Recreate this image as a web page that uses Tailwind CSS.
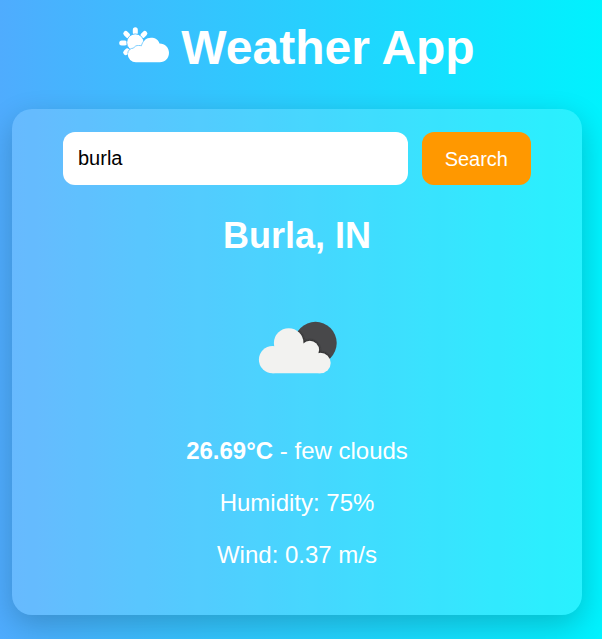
<!DOCTYPE html>
<html lang="en">
<head>
<meta charset="utf-8">
<meta name="viewport" content="width=device-width, initial-scale=1">
<title>Weather App</title>
<script src="https://cdn.jsdelivr.net/npm/@tailwindcss/browser@4"></script>
</head>
<body class="min-h-screen bg-linear-to-r/srgb from-[#4facfe] to-[#00f2fe] pt-5 pr-5 pb-6 pl-3 text-center font-['Liberation_Sans',Arial,sans-serif] text-white">
  <h1 class="mb-[33px] flex items-center justify-center gap-3 text-5xl/14 font-bold">
    <svg class="mb-1.5 h-9 w-[50px] shrink-0" viewBox="0 0 50 36" fill="none" aria-hidden="true">
      <g stroke="#fff" stroke-width="5" stroke-linecap="round">
        <path d="M16.300 2.700v3M6.800 6.500l2 2M25.800 6.500l-2 2M2.700 16h3M6.700 25.500l1.500-1.500"/>
      </g>
      <circle cx="16.300" cy="15.500" r="8.600" fill="#fff" stroke="#3fb8ff" stroke-width="0.800"/>
      <path d="M17 35.300a8.200 8.200 0 0 1-8.300-8c0-3.500 2.500-6 5.800-6.200 1.200-1.900 3-2.800 5.200-2.600 1-.1 1.900 0 2.700.3C23.600 13.700 27.200 10.700 32 10.700c4.300 0 7.400 2 8.500 5.700 5.500 0 9.500 4 9.500 9.400 0 5.500-3.900 9.500-9.200 9.500z" fill="#fff"/>
      <path d="M8.700 26.500c.2-3.200 2.600-5.300 5.800-5.400 1.200-1.900 3-2.800 5.200-2.600 1-.1 1.900 0 2.700.3.600-2.400 1.600-4.200 3.200-5.600" stroke="#7dcfff" stroke-width="1"/>
    </svg>
    Weather App
  </h1>
  <main class="rounded-[20px] bg-white/15 px-6 pt-[23px] pb-[46px] shadow-[0_10px_30px_rgba(0,0,0,0.2)]">
    <form class="mx-auto flex max-w-[468px] gap-[14px]" onsubmit="return false">
      <input type="text" aria-label="City" value="burla" class="h-[53px] min-w-0 flex-1 rounded-xl bg-white px-[15px] text-xl text-black outline-none">
      <button type="submit" class="h-[53px] rounded-xl bg-[#ff9800] px-[23px] text-xl text-white">Search</button>
    </form>
    <h2 class="mt-[31px] text-4xl/10 font-bold">Burla, IN</h2>
    <svg class="mx-auto mt-[65px] h-[54px] w-[82px]" viewBox="-2 0 82 54" role="img" aria-label="few clouds">
      <defs>
        <filter id="soft" x="-10%" y="-10%" width="120%" height="120%"><feGaussianBlur stdDeviation="1"/></filter>
        <clipPath id="disc"><circle cx="57.500" cy="22" r="21.200"/></clipPath>
        <g id="cloud">
          <circle cx="14.500" cy="38.700" r="13.600"/>
          <circle cx="30.700" cy="22" r="14.800"/>
          <circle cx="51.800" cy="29" r="9.300"/>
          <circle cx="62.400" cy="42" r="10.300"/>
          <path d="M14.500 52.300V30L22 22h20l13 10 7.400 5v15.300z"/>
        </g>
      </defs>
      <circle cx="57.500" cy="22" r="21.200" fill="#48484a"/>
      <g clip-path="url(#disc)"><use href="#cloud" fill="#222" stroke="#222" stroke-width="1" filter="url(#soft)"/></g>
      <use href="#cloud" fill="#f2f2f0"/>
    </svg>
    <div class="mt-[62px] space-y-6 text-2xl/7">
      <p><strong class="font-bold">26.69°C</strong> - few clouds</p>
      <p>Humidity: 75%</p>
      <p>Wind: 0.37 m/s</p>
    </div>
  </main>
</body>
</html>
